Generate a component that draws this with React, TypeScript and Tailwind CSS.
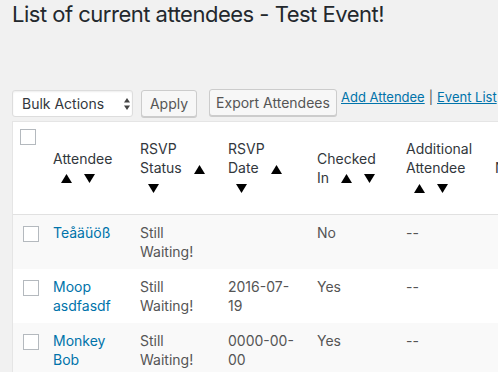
import React from "react";

const Up = () => (
  <svg width="11" height="9" viewBox="0 0 11 9" className="inline-block ml-[8px]">
    <path d="M5.5 0L11 9H0z" fill="#000" />
  </svg>
);
const Down = () => (
  <svg width="11" height="9" viewBox="0 0 11 9" className="inline-block ml-[8px]">
    <path d="M0 0H11L5.5 9z" fill="#000" />
  </svg>
);

const Box = ({ cls }: { cls: string }) => (
  <div className={`w-[16px] h-[16px] bg-white border border-[#b4b9be] ${cls}`} />
);

const rows = [
  { name: "Teåäüöß", status: "Still Waiting!", date: "", checked: "No", add: "--" },
  { name: "Moop asdfasdf", status: "Still Waiting!", date: "2016-07-19", checked: "Yes", add: "--" },
  { name: "Monkey Bob", status: "Still Waiting!", date: "0000-00-00", checked: "Yes", add: "--" },
];

export default function App() {
  return (
    <div
      className="w-[498px] h-[372px] overflow-hidden bg-[#f1f1f1] pl-[12px]"
      style={{ fontFamily: "Inter, 'Noto Sans', sans-serif" }}
    >
      <h1 className="text-[22px] leading-[29px] tracking-[-0.5px] text-[#23282d] font-normal m-0">
        List of current attendees - Test Event!
      </h1>

      <div className="flex items-start mt-[61px] h-[31px] w-[600px]">
        <div className="relative shrink-0 w-[121px] h-[27px] bg-white border border-[#ddd] rounded-[3px] shadow-[inset_0_1px_2px_rgba(0,0,0,0.07)] flex items-center pl-[9px] text-[14px] text-[#32373c]">
          Bulk Actions
          <svg width="6" height="12" viewBox="0 0 6 12" className="absolute left-[111px] top-[7px]">
            <path d="M3 0L6 4.5H0z" fill="#444" />
            <path d="M0 7.5H6L3 12z" fill="#444" />
          </svg>
        </div>
        <div className="shrink-0 ml-[8px] w-[56px] h-[27px] bg-[#f7f7f7] border border-[#ccc] rounded-[3px] shadow-[0_1px_0_#ccc] flex items-center justify-center text-[14px] text-[#555]">
          Apply
        </div>
        <div className="shrink-0 ml-[12px] -mt-[1px] w-[128px] h-[27px] bg-[#f7f7f7] border border-[#ccc] rounded-[3px] shadow-[0_1px_0_#ccc] flex items-center justify-center text-[14px] text-[#555]">
          Export Attendees
        </div>
        <div className="shrink-0 ml-[4px] -mt-[2px] text-[13px] leading-[19px] text-[#555] whitespace-nowrap">
          <span className="text-[#0073aa] underline">Add Attendee</span>
          <span className="mx-[4px] text-[#555]">|</span>
          <span className="text-[#0073aa] underline">Event List</span>
        </div>
      </div>

      <div className="w-[640px] bg-white border-l border-t border-[#e5e5e5]">
        <table className="table-fixed w-[639px] border-collapse text-[14px] leading-[19px]">
          <colgroup>
            <col className="w-[30px]" />
            <col className="w-[87px]" />
            <col className="w-[88px]" />
            <col className="w-[89px]" />
            <col className="w-[89px]" />
            <col className="w-[89px]" />
            <col className="w-[167px]" />
          </colgroup>
          <thead>
            <tr className="h-[92px] border-b border-[#e1e1e1] text-[#32373c]">
              <td className="align-top p-0">
                <Box cls="ml-[7px] mt-[7px]" />
              </td>
              <th className="font-normal text-left align-middle px-[10px]">
                Attendee <Up /> <Down />
              </th>
              <th className="font-normal text-left align-middle px-[10px]">
                RSVP Status <Up /> <Down />
              </th>
              <th className="font-normal text-left align-middle px-[10px]">
                RSVP Date <Up /> <Down />
              </th>
              <th className="font-normal text-left align-middle px-[10px]">
                Checked In <Up /> <Down />
              </th>
              <th className="font-normal text-left align-middle px-[10px]">
                Additional Attendee <Up /> <Down />
              </th>
              <th className="font-normal text-left align-top px-[10px] pt-[36px]">
                Notes <Up /> <Down />
              </th>
            </tr>
          </thead>
          <tbody>
            {rows.map((r, i) => (
              <tr key={i} className={i % 2 === 0 ? "bg-[#f9f9f9]" : "bg-white"}>
                <td className="align-top p-0">
                  <Box cls="ml-[10px] mt-[11px]" />
                </td>
                <td className="align-top px-[10px] py-[8px] text-[#0073aa]">{r.name}</td>
                <td className="align-top px-[10px] py-[8px] text-[#555]">{r.status}</td>
                <td className="align-top px-[10px] py-[8px] text-[#555]">{r.date}</td>
                <td className="align-top px-[10px] py-[8px] text-[#555]">{r.checked}</td>
                <td className="align-top px-[10px] py-[8px] text-[#555]">{r.add}</td>
                <td className="align-top px-[10px] py-[8px] text-[#555]"></td>
              </tr>
            ))}
          </tbody>
        </table>
      </div>
    </div>
  );
}
